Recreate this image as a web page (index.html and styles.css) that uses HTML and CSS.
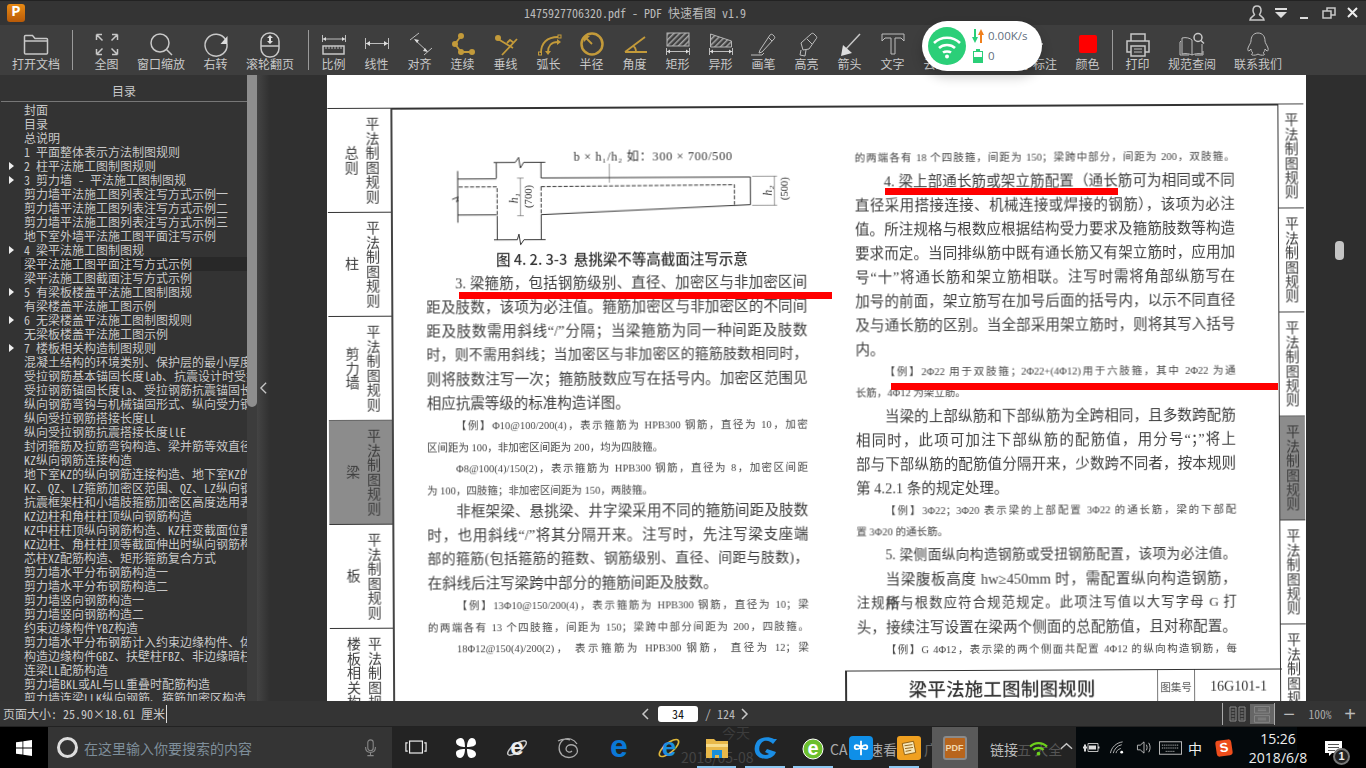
FILE: index.html
```html
<!DOCTYPE html>
<html lang="zh-CN">
<head>
<meta charset="utf-8">
<title>PDF 快速看图</title>
<link rel="stylesheet" href="styles.css">
</head>
<body>
<div class="app">
  <header class="titlebar">
    <div class="logo">P</div>
    <div class="doc-title">1475927706320.pdf - PDF 快速看图 v1.9</div>
    <div class="win-ctrls">
      <svg class="wc" viewBox="0 0 18 18"><path class="st" d="M9 2c-3 0-4 2-4 4.500 0 2 1 3 1.500 4C6 12 2.500 13 2 16h14c-.5-3-4-4-4.500-5.500.5-1 1.500-2 1.500-4C13 4 12 2 9 2z"/></svg>
      <svg class="wc" viewBox="0 0 18 18"><path class="wf" d="M3 4h12v2H3zM3 8h12l-6 6z"/></svg>
      <svg class="wc" viewBox="0 0 18 18"><path class="wf" d="M4 13h8v2H4z"/></svg>
      <svg class="wc" viewBox="0 0 18 18"><path class="st" d="M3 7h8v7H3zM7 7V4h8v7h-4"/></svg>
      <svg class="wc" viewBox="0 0 18 18"><path class="st2" d="M4 4l9 9M13 4l-9 9"/></svg>
    </div>
  </header>

  <nav class="toolbar">
    <div class="tool t-open"><svg viewBox="0 0 28 28"><path class="st" d="M2.500 10V5.500a1 1 0 0 1 1-1h7l2.500 3h11.500a1 1 0 0 1 1 1V22a1 1 0 0 1-1 1H3.500a1 1 0 0 1-1-1zM2.500 10H26"/></svg><span>打开文档</span></div>
    <i class="sep"></i>
    <div class="group g1">
      <div class="tool"><svg viewBox="0 0 28 28"><path class="st" d="M3.500 3.500l6 6M3.500 3.500h5.500M3.500 3.500V9M24.500 3.500l-6 6M24.500 3.500H19M24.500 3.500V9M3.500 23.500l6-6M3.500 23.500H9M3.500 23.500V18M24.500 23.500l-6-6M24.500 23.500H19M24.500 23.500V18"/></svg><span>全图</span></div>
      <div class="tool wide"><svg viewBox="0 0 28 28"><circle class="st" cx="13" cy="12" r="9"/><path class="st" d="M19.500 18.500L25 24"/></svg><span>窗口缩放</span></div>
      <div class="tool"><svg viewBox="0 0 28 28"><path class="st" d="M23.500 8.500A11 11 0 1 0 25 13"/><path class="wf" d="M25.500 5v8h-7z"/></svg><span>右转</span></div>
      <div class="tool wide"><svg viewBox="0 0 28 28"><rect class="st" x="5" y="2" width="18" height="24" rx="8.500"/><path class="st" d="M5 15h18"/><path class="wf" d="M14 4l3 3h-2v3h2l-3 3-3-3h2V7h-2z"/></svg><span>滚轮翻页</span></div>
    </div>
    <i class="sep"></i>
    <div class="group g2">
      <div class="tool"><svg viewBox="0 0 28 28"><path class="st1" d="M2.500 4v7M25.500 4v7M3 8h22"/><path class="wf" d="M3 8l3-2v4zM25 8l-3-2v4z"/><rect class="st" x="3" y="15" width="21" height="8"/><path class="st1" d="M6 15v3M9 15v3M12 15v3M15 15v3M18 15v3M21 15v3"/></svg><span>比例</span></div>
      <div class="tool"><svg viewBox="0 0 28 28"><path class="st1" d="M2.500 7v11M25.500 7v11M3 12.500h22"/><path class="wf" d="M3 12.500l4-2.500v5zM25 12.500l-4-2.500v5z"/></svg><span>线性</span></div>
      <div class="tool"><svg viewBox="0 0 28 28"><path class="st1" d="M13 2L4 9M26 17l-8 7M9 9l12 11"/><path class="wf" d="M8 8l5 1-2 3zM22 21l-5-1 2-3z"/></svg><span>对齐</span></div>
      <div class="tool"><svg viewBox="0 0 28 28"><path class="go" d="M12 5l-6 8 6 8h12"/><circle class="gf" cx="12" cy="5" r="3"/><circle class="gf" cx="6" cy="13" r="3"/><circle class="gf" cx="12" cy="21" r="3"/><circle class="gf" cx="23" cy="21" r="3"/></svg><span>连续</span></div>
      <div class="tool"><svg viewBox="0 0 28 28"><path class="go" d="M6 8l15 9M10 24L25 8M15 12l3-3 4 3"/><circle class="gf" cx="6" cy="7" r="3"/></svg><span>垂线</span></div>
      <div class="tool"><svg viewBox="0 0 28 28"><path class="go" d="M6 22C6 12 12 6 23 6M13 21c0-6 3-10 10-10"/><rect class="gs" x="3.500" y="21" width="3" height="3"/><rect class="gs" x="23" y="4" width="3" height="3"/><path class="gf" d="M10 20h6l-3 4zM22 8l4 3-4 3z"/></svg><span>弧长</span></div>
      <div class="tool"><svg viewBox="0 0 28 28"><circle class="go2" cx="14" cy="13" r="10.500"/><path class="go" d="M14 13L8 7"/><path class="gf" d="M6 5h6l-6 6z"/></svg><span>半径</span></div>
      <div class="tool"><svg viewBox="0 0 28 28"><path class="go" d="M4 21h22M4 21L24 6M15 21c0-3-1-5-3-6"/></svg><span>角度</span></div>
      <div class="tool"><svg viewBox="0 0 28 28"><defs><pattern id="hatch" width="4" height="4" patternUnits="userSpaceOnUse" patternTransform="rotate(45)"><rect width="1.500" height="4" fill="#a5a5a5"/></pattern></defs><rect x="3" y="2" width="22" height="13" class="hat"/><path class="st1" d="M2.500 17v7M25.500 17v7M3 20.500h22"/><path class="wf" d="M3 20.500l3-2v4zM25 20.500l-3-2v4z"/></svg><span>矩形</span></div>
      <div class="tool"><svg viewBox="0 0 28 28"><path class="hat" d="M3.500 3l21 7v6h-21z"/><path class="st1" d="M2.500 17v7M25.500 17v7M3 20.500h22"/><path class="wf" d="M3 20.500l3-2v4zM25 20.500l-3-2v4z"/></svg><span>异形</span></div>
      <div class="tool"><svg viewBox="0 0 28 28"><path class="st1" d="M10 19l-1 3 3-1L24 8c1-1 1-2 0-3l-1-1c-1-1-2-1-3 0zM18 6l4 4M1 24h11l2-2"/></svg><span>画笔</span></div>
      <div class="tool"><svg viewBox="0 0 28 28"><path class="st1" d="M8 12L18 3c1-1 2-1 3 0l2 2c1 1 1 2 0 3l-7 10-6 1-2-7zM8 19l-1 5 5 1 1-6M14 8l5 5"/></svg><span>高亮</span></div>
      <div class="tool"><svg viewBox="0 0 28 28"><path class="st" d="M24 3L9 19"/><path class="wf" d="M5 25l2-11 9 8z"/></svg><span>箭头</span></div>
      <div class="tool"><svg viewBox="0 0 28 28"><path class="st1" d="M3 3h22v7l-3-3h-6v16h-4V7H6l-3 3z"/></svg><span>文字</span></div>
      <div class="tool"><svg viewBox="0 0 28 28"><path class="st" d="M8 20a5 5 0 0 1 0-10 7 7 0 0 1 13 1 4.500 4.500 0 0 1 0 9z"/></svg><span>云线</span></div>
      <div class="tool"><svg viewBox="0 0 28 28"><rect class="st" x="4" y="5" width="20" height="16"/></svg><span>面积</span></div>
      <div class="tool wide"><svg viewBox="0 0 28 28"><circle class="st" cx="14" cy="13" r="6"/><path class="st" d="M14 3v4M14 19v4M4 13h4M20 13h4"/></svg><span>文字标注</span></div>
      <div class="tool"><div class="swatch"></div><span>颜色</span></div>
    </div>
    <i class="sep"></i>
    <div class="group g3">
      <div class="tool"><svg viewBox="0 0 28 28"><path class="st" d="M7 10V3h14v7M7 21H3V10h22v11h-4"/><rect class="st" x="7" y="15" width="14" height="10"/><path class="st1" d="M10 18h8M10 21h8"/></svg><span>打印</span></div>
      <div class="tool wide"><svg viewBox="0 0 28 28"><path class="st1" d="M14 9c-2-2-6-3-10-2v16c4-1 8 0 10 1 2-1 6-2 10-1V13M14 9v15M3 10l-1 1v13h9M25 20v4h-8"/><circle class="st" cx="20" cy="6.500" r="4"/><path class="st" d="M23 9.500l3 3"/></svg><span>规范查阅</span></div>
      <div class="tool wide"><svg viewBox="0 0 28 28"><path class="st1" d="M14 2c-5 0-7 4-7 8 0 2-2 4-3 7-.5 2 0 3 1 3l2-2c0 2 1 3 2 4-1 .5-2 1-1 2 2 .5 5 0 6-1 1 1 4 1.500 6 1 1-1 0-1.500-1-2 1-1 2-2 2-4l2 2c1 0 1.500-1 1-3-1-3-3-5-3-7 0-4-2-8-7-8z"/></svg><span>联系我们</span></div>
    </div>
  </nav>

  <main class="workspace">
    <aside class="sidebar">
      <h2 class="toc-title">目录</h2>
      <ul class="toc">
        <li>封面</li>
        <li>目录</li>
        <li>总说明</li>
        <li>1 平面整体表示方法制图规则</li>
        <li class="branch">2 柱平法施工图制图规则</li>
        <li class="branch">3 剪力墙 - 平法施工图制图规</li>
        <li>剪力墙平法施工图列表注写方式示例一</li>
        <li>剪力墙平法施工图列表注写方式示例二</li>
        <li>剪力墙平法施工图列表注写方式示例三</li>
        <li>地下室外墙平法施工图平面注写示例</li>
        <li class="branch">4 梁平法施工图制图规</li>
        <li class="current">梁平法施工图平面注写方式示例</li>
        <li>梁平法施工图截面注写方式示例</li>
        <li class="branch">5 有梁板楼盖平法施工图制图规</li>
        <li>有梁楼盖平法施工图示例</li>
        <li class="branch">6 无梁楼盖平法施工图制图规则</li>
        <li>无梁板楼盖平法施工图示例</li>
        <li class="branch">7 楼板相关构造制图规则</li>
        <li>混凝土结构的环境类别、保护层的最小厚度及其他</li>
        <li>受拉钢筋基本锚固长度lab、抗震设计时受拉钢筋基本</li>
        <li>受拉钢筋锚固长度la、受拉钢筋抗震锚固长度laE</li>
        <li>纵向钢筋弯钩与机械锚固形式、纵向受力钢筋</li>
        <li>纵向受拉钢筋搭接长度LL</li>
        <li>纵向受拉钢筋抗震搭接长度llE</li>
        <li>封闭箍筋及拉筋弯钩构造、梁并筋等效直径概念</li>
        <li>KZ纵向钢筋连接构造</li>
        <li>地下室KZ的纵向钢筋连接构造、地下室KZ的箍筋</li>
        <li>KZ、QZ、LZ箍筋加密区范围、QZ、LZ纵向钢筋构造</li>
        <li>抗震框架柱和小墙肢箍筋加密区高度选用表</li>
        <li>KZ边柱和角柱柱顶纵向钢筋构造</li>
        <li>KZ中柱柱顶纵向钢筋构造、KZ柱变截面位置纵向</li>
        <li>KZ边柱、角柱柱顶等截面伸出时纵向钢筋构造</li>
        <li>芯柱XZ配筋构造、矩形箍筋复合方式</li>
        <li>剪力墙水平分布钢筋构造一</li>
        <li>剪力墙水平分布钢筋构造二</li>
        <li>剪力墙竖向钢筋构造一</li>
        <li>剪力墙竖向钢筋构造二</li>
        <li>约束边缘构件YBZ构造</li>
        <li>剪力墙水平分布钢筋计入约束边缘构件、体积</li>
        <li>构造边缘构件GBZ、扶壁柱FBZ、非边缘暗柱</li>
        <li>连梁LL配筋构造</li>
        <li>剪力墙BKL或AL与LL重叠时配筋构造</li>
        <li>剪力墙连梁LLK纵向钢筋、箍筋加密区构造</li>
      </ul>
    </aside>
    <div class="side-scroll"><div class="side-thumb"></div></div>
    <div class="collapse"><svg viewBox="0 0 10 16"><path class="st" d="M8 2L2 8l6 6"/></svg></div>

    <section class="page">
      <div class="scan">
        <div class="ltabs">
          <div class="ltab"><b>总则</b><em>平法制图规则</em></div>
          <div class="ltab"><b>柱</b><em>平法制图规则</em></div>
          <div class="ltab"><b>剪力墙</b><em>平法制图规则</em></div>
          <div class="ltab on"><b>梁</b><em>平法制图规则</em></div>
          <div class="ltab"><b>板</b><em>平法制图规则</em></div>
          <div class="ltab"><b>楼板相关构造</b><em>平法制图规则</em></div>
        </div>
        <div class="frame">
          <div class="col left">
            <svg class="diagram" viewBox="306 165 1134 285">
              <g class="dl">
                <path d="M510 205h65l10-15 5 32 10-17h65M518 205v47M652 205v47M510 437h70l5-17 5 32 10-15h65M520 365v72M652 362v75M402 254h116M402 362h116M402 230v155M385 315l18-7-5 14 7-4M652 252h628v83M652 362l628-27"/>
                <path class="dash" d="M405 278h115v84M652 278l580-3v60M652 278v80"/>
                <path class="thin" d="M590 252v113M580 252h20M580 365h20M1285 250h75M1285 337h75M1352 250v87M857 210v57"/>
              </g>
              <text class="dt" x="750" y="200" textLength="475">b × h₁/h₂ 如：300 × 700/500</text>
              <text class="dt it" transform="translate(582 328) rotate(-90)">h₁</text>
              <text class="dt sm" transform="translate(624 342) rotate(-90)">(700)</text>
              <text class="dt it" transform="translate(1345 308) rotate(-90)">h₂</text>
              <text class="dt sm" transform="translate(1392 322) rotate(-90)">(500)</text>
            </svg>
            <div class="caption">图 4. 2. 3-3  悬挑梁不等高截面注写示意</div>
            <p class="ln ind">3. 梁箍筋，包括钢筋级别、直径、加密区与非加密区间</p>
            <p class="ln">距及肢数，该项为必注值。箍筋加密区与非加密区的不同间</p>
            <p class="ln">距及肢数需用斜线“/”分隔；当梁箍筋为同一种间距及肢数</p>
            <p class="ln dense">时，则不需用斜线；当加密区与非加密区的箍筋肢数相同时，</p>
            <p class="ln">则将肢数注写一次；箍筋肢数应写在括号内。加密区范围见</p>
            <p class="ln end">相应抗震等级的标准构造详图。</p>
            <p class="sm ind">【例】Φ10@100/200(4)，表示箍筋为 HPB300 钢筋，直径为 10，加密</p>
            <p class="sm end">区间距为 100，非加密区间距为 200，均为四肢箍。</p>
            <p class="sm ind">Φ8@100(4)/150(2)，表示箍筋为 HPB300 钢筋，直径为 8，加密区间距</p>
            <p class="sm end">为 100，四肢箍；非加密区间距为 150，两肢箍。</p>
            <p class="ln ind tight">非框架梁、悬挑梁、井字梁采用不同的箍筋间距及肢数</p>
            <p class="ln">时，也用斜线“/”将其分隔开来。注写时，先注写梁支座端</p>
            <p class="ln dense">部的箍筋(包括箍筋的箍数、钢筋级别、直径、间距与肢数)，</p>
            <p class="ln end">在斜线后注写梁跨中部分的箍筋间距及肢数。</p>
            <p class="sm ind">【例】13Φ10@150/200(4)，表示箍筋为 HPB300 钢筋，直径为 10；梁</p>
            <p class="sm">的两端各有 13 个四肢箍，间距为 150；梁跨中部分间距为 200，四肢箍。</p>
            <p class="sm ind">18Φ12@150(4)/200(2)， 表示箍筋为 HPB300 钢筋， 直径为 12；梁</p>
          </div>
          <div class="col right">
            <p class="sm">的两端各有 18 个四肢箍，间距为 150；梁跨中部分，间距为 200，双肢箍。</p>
            <p class="ln ind">4. 梁上部通长筋或架立筋配置（通长筋可为相同或不同</p>
            <p class="ln">直径采用搭接连接、机械连接或焊接的钢筋），该项为必注</p>
            <p class="ln">值。所注规格与根数应根据结构受力要求及箍筋肢数等构造</p>
            <p class="ln">要求而定。当同排纵筋中既有通长筋又有架立筋时，应用加</p>
            <p class="ln">号“十”将通长筋和架立筋相联。注写时需将角部纵筋写在</p>
            <p class="ln">加号的前面，架立筋写在加号后面的括号内，以示不同直径</p>
            <p class="ln">及与通长筋的区别。当全部采用架立筋时，则将其写入括号</p>
            <p class="ln end">内。</p>
            <p class="sm ind">【例】2Φ22 用于双肢箍；2Φ22+(4Φ12)用于六肢箍，其中 2Φ22 为通</p>
            <p class="sm end">长筋，4Φ12 为架立筋。</p>
            <p class="ln ind">当梁的上部纵筋和下部纵筋为全跨相同，且多数跨配筋</p>
            <p class="ln">相同时，此项可加注下部纵筋的配筋值，用分号“；”将上</p>
            <p class="ln">部与下部纵筋的配筋值分隔开来，少数跨不同者，按本规则</p>
            <p class="ln end">第 4.2.1 条的规定处理。</p>
            <p class="sm ind">【例】3Φ22；3Φ20 表示梁的上部配置 3Φ22 的通长筋，梁的下部配</p>
            <p class="sm end">置 3Φ20 的通长筋。</p>
            <p class="ln ind denser">5. 梁侧面纵向构造钢筋或受扭钢筋配置，该项为必注值。</p>
            <p class="ln ind">当梁腹板高度 hw≥450mm 时，需配置纵向构造钢筋，所</p>
            <p class="ln densest">注规格与根数应符合规范规定。此项注写值以大写字母 G 打</p>
            <p class="ln">头，接续注写设置在梁两个侧面的总配筋值，且对称配置。</p>
            <p class="sm ind">【例】G 4Φ12，表示梁的两个侧面共配置 4Φ12 的纵向构造钢筋，每</p>
            <div class="stamp">
              <div class="stamp-name">梁平法施工图制图规则</div>
              <div class="stamp-key">图集号</div>
              <div class="stamp-val">16G101-1</div>
            </div>
          </div>
        </div>
        <div class="rtabs">
          <div class="rtab">平法制图规则</div>
          <div class="rtab">平法制图规则</div>
          <div class="rtab">平法制图规则</div>
          <div class="rtab on">平法制图规则</div>
          <div class="rtab">平法制图规则</div>
          <div class="rtab">平法制图规则</div>
        </div>
      </div>
      <i class="mark m1"></i>
      <i class="mark m2"></i>
      <i class="mark m3"></i>
    </section>
    <div class="main-scroll"><div class="main-thumb"></div></div>
  </main>

  <footer class="statusbar">
    <div class="size-info"><span>页面大小: 25.90×18.61 厘米</span></div>
    <div class="pager">
      <svg class="chev" viewBox="0 0 10 14"><path class="st" d="M7 2L2 7l5 5"/></svg>
      <div class="page-input">34</div>
      <span>/ 124</span>
      <svg class="chev" viewBox="0 0 10 14"><path class="st" d="M3 2l5 5-5 5"/></svg>
    </div>
    <div class="view-tools">
      <i class="vsep"></i>
      <svg class="v-two" viewBox="0 0 18 18"><path class="vs" d="M1 2h6v14H1zM10 2h6v14h-6zM2.500 5h3M2.500 8h3M2.500 11h3M2.500 14h3M11.500 5h3M11.500 8h3M11.500 11h3M11.500 14h3"/></svg>
      <div class="v-one"><svg viewBox="0 0 24 24"><path class="vs" d="M3 3h18v8H3zM3 14h18v8H3zM7 6h10M7 8h10M7 17h10M7 19h10"/></svg></div>
      <i class="vsep"></i>
      <span class="zbtn zm">−</span>
      <span class="zoomv">100%</span>
      <span class="zbtn zp">+</span>
    </div>
  </footer>

  <div class="taskbar">
    <div class="start"><svg viewBox="0 0 16 16"><path class="white" d="M0 2.300l6.500-.9v6.200H0zM7.300 1.300L16 0v7.600H7.300zM0 8.400h6.500v6.200L0 13.700zM7.300 8.400H16V16l-8.700-1.200z"/></svg></div>
    <div class="search">
      <span class="ring"></span>
      <span class="search-text">在这里输入你要搜索的内容</span>
      <svg class="mic" viewBox="0 0 14 20"><rect class="ms" x="4" y="1" width="6" height="12" rx="3"/><path class="ms" d="M1.500 9c0 4 2 6 5.500 6s5.500-2 5.500-6M7 15v3M3.500 18.500h7"/></svg>
    </div>
    <div class="task-view"><svg viewBox="0 0 24 16"><rect class="taskv" x="5" y="1" width="14" height="13"/><path class="taskv" d="M3 3H1v9h2M21 3h2v9h-2"/></svg></div>
    <div class="apps a1">
      <div class="app-ic"><svg viewBox="0 0 24 24"><path class="white" d="M11 11C8 11 2 10 2 6c0-3 3-4 5-4 3 0 4 4 4 9zM13 11c0-3 1-9 5-9 3 0 4 3 4 5 0 3-4 4-9 4zM13 13c3 0 9 1 9 5 0 3-3 4-5 4-3 0-4-4-4-9zM11 13c0 3-1 9-5 9-3 0-4-3-4-5 0-3 4-4 9-4z"/></svg></div>
      <div class="app-ic"><svg viewBox="0 0 24 24"><ellipse class="st" cx="12" cy="12" rx="11" ry="4" transform="rotate(-35 12 12)"/><text class="ie-t" x="12" y="19">e</text></svg></div>
      <div class="app-ic"><svg viewBox="0 0 24 24"><path class="gr" d="M21 8C18 3 12 1 7 4 2 8 2 15 6 19c5 4 12 3 15-2 1-3 0-7-4-8-4-1-7 1-7 4 0 3 4 4 6 2M2 5c4-2 9-2 12-1"/></svg></div>
      <div class="app-ic"><svg viewBox="0 0 24 24"><text class="edge-t" x="12" y="21">e</text></svg></div>
    </div>
    <div class="apps a2">
      <div class="app-ic"><svg viewBox="0 0 26 26"><ellipse class="ie-ring" cx="13" cy="13" rx="13" ry="5" transform="rotate(-40 13 13)"/><text class="ie-b" x="13" y="22">e</text></svg></div>
      <div class="app-ic"><svg viewBox="0 0 24 24"><path class="fo" d="M1 3h8l2 2h12v17H1z"/><path class="fo2" d="M1 8h22v3H1z"/><path class="fb" d="M7 14h10v8h-3v-3h-4v3H7z"/></svg></div>
      <div class="app-ic"><svg viewBox="0 0 24 24"><path class="bl" d="M21 3C15 0 6 1 3 7c-3 6-1 13 5 15 6 2 13 0 15-6l-9-3-2 3 4 2c-3 2-7 1-9-2-2-4 0-9 4-11 4-1 7 1 9 3l4-5z"/></svg></div>
      <div class="app-ic"><svg viewBox="0 0 24 24"><circle class="gc" cx="12" cy="13" r="10"/><text class="ge" x="12" y="19">e</text></svg></div>
      <div class="app-ic"><div class="fly"><svg viewBox="0 0 20 20"><path class="flyp" d="M10 2v16M3 9c0-3 3-3 7 0 4-3 7-3 7 0s-3 3-7 0c-4 3-7 3-7 0z"/></svg></div></div>
      <div class="app-ic"><div class="notes"><svg viewBox="0 0 16 16"><path class="notep" d="M2 4l10-2 2 10-10 2zM4 6l7-1M4.500 8.500l7-1M5 11l5-1"/></svg></div></div>
      <div class="app-ic active"><div class="pdf">PDF</div></div>
    </div>
    <span class="ghost g-a">今天</span>
    <span class="ghost g-b">2018/05-08</span>
    <span class="ghost g-c">CA</span>
    <span class="ghost g-d">速看图</span>
    <span class="ghost g-e">广州</span>
    <span class="ghost g-f">链接</span>
    <span class="ghost g-g">五 大全</span>
    <i class="under u1"></i><i class="under u2"></i><i class="under u3"></i><i class="under u4"></i>
    <svg class="g-wifi" viewBox="0 0 20 16"><path class="gw" d="M1 6c5-5 13-5 18 0M4.500 9.500c3-3 8-3 11 0"/><circle class="gwf" cx="10" cy="13.500" r="2"/></svg>
    <div class="notify"><svg viewBox="0 0 20 18"><path class="white" d="M1 1h17v12H8l-3 3v-3H1z"/><path class="nl" d="M4 4.500h11M4 7.500h11M4 10.500h7"/></svg><span class="nbadge">1</span></div>
    <div class="tray">
      <svg class="caret-up" viewBox="0 0 14 8"><path class="st" d="M1 7l6-5.500L13 7"/></svg>
      <svg class="tr t-b" viewBox="0 0 18 14"><path class="st1" d="M6 3h10v8H6z"/><path class="wf" d="M7 5h7v4H7zM16 6h1.500v2H16zM2 4h2v2h1v2H1V6h1zM2 8h2v3H2z"/></svg>
      <svg class="tr t-n" viewBox="0 0 16 16"><path class="st1" d="M1 14c1-6 6-11 13-12M4 14c1-4 4-8 9-9M7 14c0-2 2-4 5-5"/><circle class="white" cx="13" cy="13" r="1.500"/></svg>
      <svg class="tr t-v" viewBox="0 0 18 16"><path class="st1" d="M2 5.500h3L9 2v12L5 10.500H2zM11.500 5c1 2 1 4 0 6M14 3c2 3 2 7 0 10"/></svg>
      <svg class="t-k" viewBox="0 0 24 14"><rect class="st1" x=".5" y=".5" width="23" height="13"/><path class="dots" d="M3 4h18M3 7h18M7 10.500h10"/></svg>
      <span class="t-zh">中</span>
      <div class="sogou">S</div>
      <div class="clock"><span>15:26</span><span>2018/6/8</span></div>
    </div>
  </div>

  <aside class="net">
    <div class="net-circle"><svg viewBox="0 0 30 30"><path class="nw" d="M2 12c7-7 19-7 26 0M7 17c4-4 12-4 16 0M11 21.500c2-1.500 6-1.500 8 0"/><circle class="white" cx="15" cy="25.500" r="2"/></svg></div>
    <div class="net-stats">
      <div class="net-row"><svg viewBox="0 0 12 14"><path class="ar1" d="M2 0h2v8h2l-3 6-3-6h2z"/><path class="ar2" d="M8 14h2V6h2L9 0 6 6h2z"/></svg><span>0.00K/s</span></div>
      <div class="net-row"><svg viewBox="0 0 12 14"><path class="bat" d="M4 0h4v2h3v12H1V2h3zM2 3v5h8V3z"/></svg><span>0</span></div>
    </div>
  </aside>
</div>
</body>
</html>
```
FILE: styles.css
```css
*{box-sizing:border-box;margin:0;padding:0}
html,body{width:100%;height:100%;overflow:hidden}
body{font:12px/14px "Noto Sans Mono CJK SC","Noto Sans CJK SC","Liberation Mono",monospace;color:#c8c8c8;background:#333}
.app{position:relative;width:1366px;height:768px;display:flex;flex-direction:column;overflow:hidden}
svg{display:block;overflow:visible}
.st{fill:none;stroke:#c8c8c8;stroke-width:1.500}
.st1{fill:none;stroke:#bdbdbd;stroke-width:1}
.st2{fill:none;stroke:#eee;stroke-width:2}
.wf{fill:#ddd}
.white{fill:#fff}
.go{fill:none;stroke:#c39a3a;stroke-width:1.800}
.go2{fill:none;stroke:#c39a3a;stroke-width:2.500}
.gf{fill:#c39a3a}
.gs{fill:none;stroke:#c39a3a;stroke-width:1}
.hat{fill:url(#hatch);stroke:#b5b5b5;stroke-width:1}

.titlebar{height:25px;flex:none;display:flex;align-items:center;background:#343434;border-top:1px solid #222;position:relative}
.logo{width:18px;height:18px;margin-left:7px;border-radius:3px;background:linear-gradient(#e88a14,#b85a08);color:#fff;font:bold 15px/18px "Liberation Mono",monospace;text-align:center}
.doc-title{margin-left:499px;width:240px;color:#bbb;white-space:nowrap;font-size:12px}
.win-ctrls{margin-left:auto;margin-right:4px;display:flex;gap:6px}
.wc{width:18px;height:18px}

.toolbar{height:50px;flex:none;display:flex;align-items:flex-start;background:#3e3e3e}
.tool{width:43px;height:50px;flex:none;display:flex;flex-direction:column;align-items:center;padding-top:6px}
.tool svg{width:28px;height:28px;flex:none;margin-bottom:-2px}
.tool span{line-height:14px;white-space:nowrap}
.tool.wide{width:66px}
.t-open{width:72px}
.sep{width:1px;height:40px;margin-top:5px;background:#9a9a9a;flex:none}
.group{display:flex}
.g1{margin-left:12px;width:223px}
.g2{margin-left:3px;width:800px}
.g3{margin-left:3px}
.swatch{width:18px;height:18px;margin:4px 0 4px;background:#f00;border-radius:2px}

.workspace{height:626px;flex:none;display:flex;background:#303030}
.sidebar{width:247px;flex:none;background:#333;overflow:hidden}
.toc-title{font-size:12px;font-weight:400;line-height:21px;height:27px;padding-top:5px;text-align:center;border-bottom:1px solid #777;margin-left:1px}
.toc{list-style:none;padding-top:1px}
.toc li{height:14px;padding-left:24px;white-space:nowrap;overflow:hidden;position:relative;margin-left:0}
.toc .branch::before{content:"";position:absolute;left:9px;top:3px;border-left:5px solid #eee;border-top:4px solid transparent;border-bottom:4px solid transparent}
.toc .current{background:linear-gradient(#282828,#282828) 21px 0/100% 100% no-repeat}
.side-scroll{width:10px;flex:none;background:#3c3c3c}
.side-thumb{height:332px;background:#8e8e8e;border-radius:0 0 5px 5px}
.collapse{width:13px;flex:none;display:flex;align-items:center;justify-content:center;background:linear-gradient(90deg,#444,#303030)}
.collapse svg{width:9px;height:14px}

.page{margin-left:57px;width:979px;flex:none;background:#fff;overflow:hidden;position:relative}
.scan{display:flex;padding:33px 0 0 2px;width:979px;height:760px;transform:rotate(-.27deg);transform-origin:0 50%;color:#3c3c3c;font-family:"Liberation Serif","Noto Sans CJK SC",serif;filter:blur(.25px)}
.ltabs{width:63px;flex:none;display:flex;flex-direction:column}
.ltab{height:104px;flex:none;border-top:1.500px solid #333;display:flex;align-items:center;justify-content:flex-end;padding-right:11px;gap:6px}
.ltab.on{background:#8c8c8c;border-top-color:#666}
.ltab b,.ltab em{writing-mode:vertical-rl;font:400 14px/15px "Noto Sans CJK SC",sans-serif;letter-spacing:.5px;white-space:nowrap}
.frame{width:888px;flex:none;display:flex;gap:48px;padding-left:33px;border-left:2.500px solid #444;border-top:2.500px solid #333;border-right:1.500px solid #333}
.col{width:381px;flex:none;display:flex;flex-direction:column}
.col.right{padding-top:40px;width:380px}
.diagram{width:378px;height:95px;margin-top:40px;flex:none}
.dl{fill:none;stroke:#333;stroke-width:3}
.dash{stroke-dasharray:12 5}
.thin{stroke-width:1.500}
.dt{font:37px "Liberation Serif","Noto Sans CJK SC",serif;fill:#333}
.dt.it{font-style:italic;font-size:36px}
.dt.sm{font-size:32px}
.caption{height:25px;margin-top:2px;padding-left:70px;font:500 14.500px/25px "Noto Sans CJK SC",sans-serif;white-space:pre;color:#333}
.ln{height:24px;font:14.500px/24px "Liberation Serif","Noto Sans CJK SC",serif;text-align:justify;text-align-last:justify}
.ln.dense{font-size:13.900px}
.ln.denser{font-size:13.700px}
.ln.densest{font-size:13.300px}
.sm{height:21.500px;font:10.500px/21.500px "Liberation Serif","Noto Sans CJK SC",serif;text-align:justify;text-align-last:justify;color:#444}
.ind{padding-left:29px}
.ln.end,.sm.end{text-align-last:left}
.tight{margin-top:-2px}
.stamp{width:437px;height:44px;margin:10px 0 0 -12px;flex:none;display:flex;border-left:2.500px solid #333;border-top:1.500px solid #333;color:#333}
.stamp-name{width:311px;text-align:center;font:500 18.500px/34px "Noto Sans CJK SC",sans-serif;border-right:1px solid #777;letter-spacing:.2px}
.stamp-key{width:37px;text-align:center;font:10.500px/34px "Noto Sans CJK SC",sans-serif;border-right:1px solid #777;color:#555}
.stamp-val{flex:1;text-align:center;font:14px/34px "Liberation Serif",serif}
.rtabs{width:25px;flex:none;display:flex;flex-direction:column}
.rtab{height:104px;flex:none;border-top:1.500px solid #444;writing-mode:vertical-rl;text-align:center;font:14px/25px "Noto Sans CJK SC",sans-serif;letter-spacing:.4px;padding-left:3px}
.rtab.on{background:#8c8c8c;border-top-color:#666}
.mark{position:absolute;height:7px;background:#f00}
.m1{left:132px;top:217px;width:373px}
.m2{left:558px;top:113px;width:233px}
.m3{left:564px;top:308px;width:387px}
.main-scroll{flex:1;background:#2e2e2e;padding:166px 2px 0 29px}
.main-thumb{width:9px;height:19px;background:#c4c4c4;border-radius:4px}

.statusbar{height:26px;flex:none;display:flex;align-items:center;background:#343434;border-bottom:1px solid #222}
.size-info{width:640px;padding-left:3px}
.size-info span{display:inline-block;padding-right:1px;border-right:1px solid #ddd;height:18px;line-height:18px}
.pager{display:flex;align-items:center;width:116px;margin-left:1px;color:#bbb}
.chev{width:10px;height:14px;flex:none}
.page-input{width:40px;height:16px;margin:0 7px;border-radius:3px;background:#fff;color:#111;text-align:center;line-height:16px}
.pager span{width:34px;white-space:nowrap}
.view-tools{margin-left:auto;display:flex;align-items:center;height:22px;width:144px}
.vsep{width:1px;height:22px;background:#aaa;flex:none}
.v-two{width:18px;height:18px;margin:0 3px 0 6px}
.vs{fill:none;stroke:#8a8a8a;stroke-width:1}
.v-one{width:24px;height:20px;background:#666}
.v-one svg{width:24px;height:20px}
.zbtn{font:20px/20px "Liberation Sans",sans-serif;color:#bbb;width:12px;text-align:center}
.zm{margin-left:8px}
.zoomv{font-size:11.500px;margin-left:8px;width:34px;color:#aaa;text-align:center}
.zp{margin-left:7px}

.taskbar{height:41px;flex:none;display:flex;align-items:stretch;background:#232323;position:relative;overflow:hidden;z-index:0}
.start{width:48px;background:#000;display:flex;align-items:center;justify-content:center}
.start svg{width:16px;height:16px}
.search{width:344px;background:#343434;display:flex;align-items:center;padding-left:9px}
.ring{width:21px;height:21px;border:3px solid #ddd;border-radius:50%;flex:none}
.search-text{font:14px/20px "Noto Sans CJK SC",sans-serif;color:#7e8e9a;margin-left:6px;white-space:nowrap}
.mic{width:13px;height:18px;margin-left:112px}
.ms{fill:none;stroke:#888;stroke-width:1.200}
.task-view{width:48.500px;display:flex;align-items:center;justify-content:center}
.task-view svg{width:22px;height:15px}
.taskv{fill:none;stroke:#eee;stroke-width:1.300}
.apps{display:flex}
.a1 .app-ic{width:51px}
.a2 .app-ic{width:48px}
.app-ic{display:flex;align-items:center;justify-content:center;flex:none}
.app-ic svg{width:24px;height:24px}
.a2 .app-ic.active{background:#5a5a5a;width:46px;margin-left:-1px}
.ie-t{font:bold 24px "Liberation Sans",sans-serif;fill:#eee;text-anchor:middle}
.gr{fill:none;stroke:#aaa;stroke-width:1.300}
.edge-t{font:bold 32px "Liberation Sans",sans-serif;fill:#0a78d7;text-anchor:middle}
.ie-ring{fill:none;stroke:#e0b83a;stroke-width:1.800}
.ie-b{font:bold 28px "Liberation Sans",sans-serif;fill:#1c8fe0;text-anchor:middle}
.fo{fill:#e8b84a}
.fo2{fill:#f7dc8c}
.fb{fill:#1b8fd8}
.bl{fill:#1a8de4}
.gc{fill:#6cbf2d;stroke:#fff;stroke-width:1}
.ge{font:bold 20px "Liberation Sans",sans-serif;fill:#fff;text-anchor:middle}
.fly{width:24px;height:24px;background:#0f8fe8;border-radius:4px;display:flex;align-items:center;justify-content:center}
.fly svg{width:18px;height:18px}
.flyp{fill:none;stroke:#fff;stroke-width:2}
.notes{width:24px;height:24px;background:#f0a020;border-radius:3px;display:flex;align-items:center;justify-content:center}
.notes svg{width:18px;height:18px}
.notep{fill:#f6e6b8;stroke:#8a5a10;stroke-width:.8}
.pdf{width:24px;height:24px;background:#b8651c;border:2px solid #8b8b8b;border-radius:3px;color:#f0d8b0;font:bold 9px/20px "Liberation Sans",sans-serif;text-align:center}
.ghost{position:absolute;color:#555;font:14px/16px "Noto Sans CJK SC",sans-serif;white-space:nowrap;z-index:-1}
.g-a{left:722px;top:-3px;color:#3c3c3c}
.g-b{left:681px;top:22px;color:#444}
.g-c{left:830px;top:14px;color:#aaa}
.g-d{left:869px;top:14px;color:#aaa}
.g-e{left:924px;top:14px;color:#666}
.g-f{left:990px;top:14px;color:#bbb}
.g-g{left:1017px;top:14px;color:#555}
.under{position:absolute;bottom:0;height:2px;background:#8ec8f2}
.u1{left:697px;width:39px}
.u2{left:745px;width:40px}
.u3{left:793px;width:40px}
.u4{left:889px;width:30px}
.g-wifi{position:absolute;left:1029px;top:14px;width:19px;height:15px}
.gw{fill:none;stroke:#6cd01c;stroke-width:2.500}
.gwf{fill:#6cd01c}
.tray{position:absolute;left:1076px;top:0;width:221px;height:41px;background:#04090c;display:flex;align-items:center;padding-left:6px}
.caret-up{position:absolute;left:-16px;top:15px;width:13px;height:8px}
.tr{width:18px;height:15px;flex:none}
.t-b{margin-right:8px}
.t-n{margin-right:9px}
.t-v{margin-right:6px}
.t-k{width:23px;height:14px;flex:none}
.dots{fill:none;stroke:#ddd;stroke-width:1;stroke-dasharray:1 1}
.t-zh{font:14px/16px "Noto Sans CJK SC",sans-serif;color:#eee;margin-left:6px;width:14px;flex:none}
.sogou{width:16px;height:16px;margin-left:14px;background:#ee4d1c;border-radius:3px;color:#fff;font:bold 13px/16px "Liberation Sans",sans-serif;text-align:center;transform:rotate(-8deg);flex:none}
.clock{display:flex;flex-direction:column;align-items:center;margin-left:18px;width:56px;flex:none;font:14px/19px "Open Sans",sans-serif;color:#eee;white-space:nowrap}
.notify{position:absolute;left:1297px;top:0;width:69px;height:41px;background:#000}
.notify svg{position:absolute;left:27px;top:13px;width:20px;height:18px}
.nl{stroke:#555;stroke-width:1}
.nbadge{position:absolute;left:36px;top:21px;width:17px;height:17px;border-radius:50%;background:#222;border:2px solid #777;color:#eee;font:bold 11px/13px "Liberation Sans",sans-serif;text-align:center}

.net{position:absolute;left:922px;top:21px;width:120px;height:50px;border-radius:25px;background:#fff;box-shadow:0 6px 12px rgba(0,0,0,.2);display:flex;align-items:center;padding-left:6px}
.net-circle{width:38px;height:38px;border-radius:50%;background:#2bcf78;display:flex;align-items:center;justify-content:center}
.net-circle svg{width:30px;height:30px}
.nw{fill:none;stroke:#fff;stroke-width:2.500}
.net-stats{margin-left:6px;display:flex;flex-direction:column;gap:6px;font:11.500px/14px "Open Sans",sans-serif;color:#5f6f80}
.net-row{display:flex;align-items:center;gap:4px}
.net-row svg{width:12px;height:14px;flex:none}
.ar1{fill:#2bcf78}
.ar2{fill:#f0801c}
.bat{fill:#2bcf78}
```
